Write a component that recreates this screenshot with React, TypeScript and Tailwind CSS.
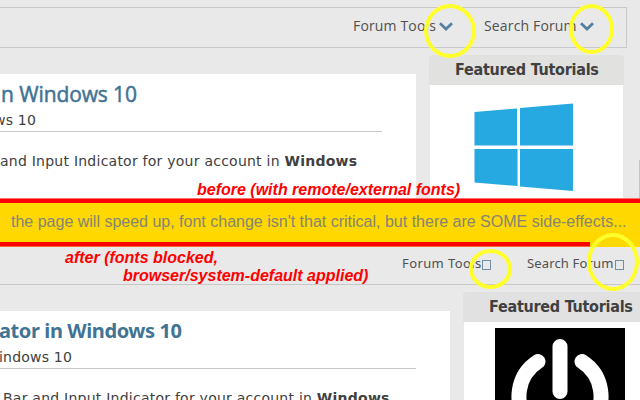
import React from "react";

const Circle = ({ className }: { className: string }) => (
  <div className={"absolute rounded-[50%] border-4 border-[#ffff2b] " + className} />
);

const Chevron = () => (
  <svg width="14" height="9" viewBox="0 0 14 9" className="shrink-0">
    <path d="M1 1.2 L7 7 L13 1.2" fill="none" stroke="#52809e" strokeWidth="2.7" />
  </svg>
);

const MissingGlyph = () => <span className="mt-[3px] h-[10px] w-[9px] shrink-0 border border-[#6f8fa8]" />;

function Before() {
  return (
    <section className="h-[198px] overflow-hidden bg-[#e9e9e9] pt-[7px]">
      <div className="flex h-[41px] w-[627px] items-start border border-l-0 border-[#c8c8c8] pt-[8px] font-['Open_Sans',sans-serif] text-[14px] leading-[20px] text-[#505050]">
        <div className="ml-[353px] flex w-[131px] items-center whitespace-nowrap">
          <span className="w-[86px] tracking-[0.15px]">Forum Tools</span>
          <Chevron />
        </div>
        <div className="flex items-center whitespace-nowrap">
          <span className="w-[96px] tracking-[0.15px]">Search Forum</span>
          <Chevron />
        </div>
      </div>
      <div className="flex items-start">
        <main className="mt-[26px] h-[130px] w-[416px] bg-white whitespace-nowrap font-['DejaVu_Sans',sans-serif] text-[#404040]">
          <h1 className="pt-[5px] pl-px font-['Open_Sans',sans-serif] text-[21px] leading-[30px] tracking-[-0.1px] text-[#417394] [-webkit-text-stroke:0.5px_#417394]">n Windows 10</h1>
          <p className="-ml-[6px] pt-[2px] text-[14px] leading-[18px] tracking-[0.2px]">ws 10</p>
          <div className="mt-[2px] w-[382px] border-t border-[#c8c8c8]" />
          <p className="mt-[20px] text-[14px] leading-[18px] tracking-[0.24px]">and Input Indicator for your account in <b>Windows</b></p>
        </main>
        <aside className="mt-[7px] ml-[13px] w-[195px]">
          <h2 className="h-[30px] rounded-t-[4px] bg-[#e1e1df] pl-[26px] font-['DejaVu_Sans_Condensed','DejaVu_Sans',sans-serif] text-[16px] leading-[30px] font-bold tracking-[-0.26px] whitespace-nowrap text-[#404040]">Featured Tutorials</h2>
          <div className="mx-px h-[114px] bg-white pt-[18px] pl-[44px]">
            <svg width="100" height="90" viewBox="0 0 100 90" fill="#26a8e0">
              <path d="M.5 9 L43 5.5 V42.5 H.5Z M46 5 L99 .5 V42.5 H46Z M.5 46 H43.5 V83 L.5 79.5Z M46 46 H99 V88 L46 83.5Z" />
            </svg>
          </div>
        </aside>
        <div className="mt-[112px] ml-auto h-[40px] w-px bg-[#c4c4c4]" />
      </div>
    </section>
  );
}

function After() {
  return (
    <section className="h-[153px] overflow-hidden bg-[#e9e9e9]">
      <div className="flex h-[38px] items-start border-b border-[#c8c8c8] pt-[7px] font-['Noto_Sans',sans-serif] text-[13px] leading-[18px] text-[#505050]">
        <div className="ml-[402px] flex w-[125px] items-center whitespace-nowrap">
          <span className="w-[80px] tracking-[0.4px]">Forum Tools</span>
          <MissingGlyph />
        </div>
        <div className="flex items-center whitespace-nowrap">
          <span className="w-[88px] tracking-[0.15px]">Search Forum</span>
          <MissingGlyph />
        </div>
      </div>
      <div className="flex items-start">
        <main className="mt-[26px] h-[100px] w-[450px] shrink-0 overflow-hidden bg-white whitespace-nowrap font-['DejaVu_Sans',sans-serif] text-[#404040]">
          <h1 className="-ml-[1px] pt-[5px] font-['Noto_Sans',sans-serif] text-[20px] leading-[30px] font-bold tracking-[-0.4px] text-[#417394]">ator in Windows 10</h1>
          <p className="-ml-px pt-[2px] text-[14px] leading-[18px] tracking-[0.2px]">indows 10</p>
          <div className="mt-[2px] w-[416px] border-t border-[#c8c8c8]" />
          <p className="mt-[20px] pl-[3px] text-[14px] leading-[18px] tracking-[0.24px]">Bar and Input Indicator for your account in <b>Windows</b></p>
        </main>
        <aside className="mt-[7px] ml-[13px] w-[177px] overflow-hidden">
          <h2 className="h-[30px] rounded-tl-[4px] bg-[#e1e1e1] pl-[26px] font-['DejaVu_Sans_Condensed','DejaVu_Sans',sans-serif] text-[16px] leading-[30px] font-bold tracking-[-0.26px] whitespace-nowrap text-[#404040]">Featured Tutorials</h2>
          <div className="ml-px h-[80px] bg-white pt-[6px] pl-[31px]">
            <svg width="130" height="80" viewBox="0 0 130 80" className="bg-black" fill="none" stroke="white" strokeLinecap="round" strokeWidth="15">
              <path d="M65 18.5 V63.5 M43 33.5 A41 41 0 1 0 87 33.5" />
            </svg>
          </div>
        </aside>
      </div>
    </section>
  );
}

export default function App() {
  return (
    <div className="relative h-[400px] w-[640px] overflow-hidden">
      <Before />
      <div className="h-[49px] border-y border-t-[#ff7070] border-b-[#f4683a] bg-[#ffd800]">
        <div className="h-[47px] border-y-4 border-[#ff0000] pl-[11px] font-['Liberation_Sans',Arial,sans-serif] text-[16px] leading-[38px] whitespace-nowrap text-[#858577]">
          the page will speed up, font change isn't that critical, but there are SOME side-effects...
        </div>
      </div>
      <After />
      <div className="absolute top-[242px] left-[590px] h-[5px] w-[50px] bg-[#ffd800]" />
      <div className="font-['Liberation_Sans',Arial,sans-serif] text-[16px] leading-[18px] font-bold whitespace-nowrap text-[#ff0000] italic">
        <p className="absolute top-[181px] left-[197px]">before (with remote/external fonts)</p>
        <p className="absolute top-[249px] left-[65px]">after (fonts blocked,</p>
        <p className="absolute top-[267px] left-[123px]">browser/system-default applied)</p>
      </div>
      <Circle className="top-[4px] left-[424px] h-[54px] w-[52px]" />
      <Circle className="top-[4px] left-[569px] h-[50px] w-[45px]" />
      <Circle className="top-[249px] left-[469px] h-[40px] w-[43px]" />
      <Circle className="top-[233px] left-[587px] h-[58px] w-[52px]" />
    </div>
  );
}
